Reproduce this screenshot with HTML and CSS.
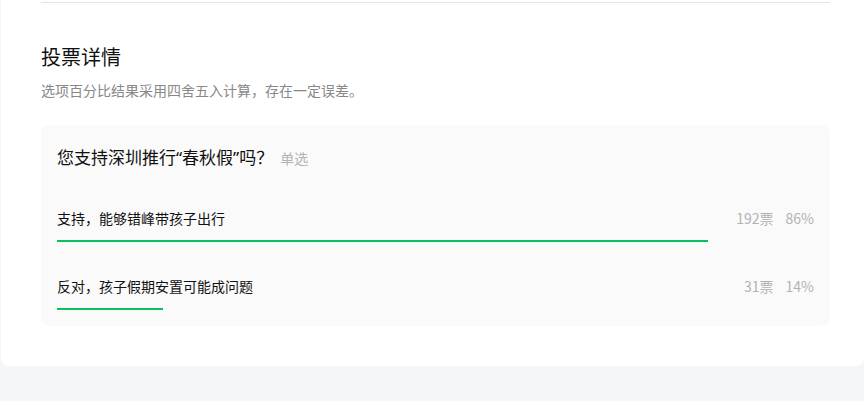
FILE: index.html
```html
<!DOCTYPE html>
<html lang="zh">
<head>
<meta charset="utf-8">
<link rel="stylesheet" href="styles.css">
</head>
<body>
<div class="card">
  <div class="divider"></div>
  <h2 class="title">投票详情</h2>
  <p class="subtitle">选项百分比结果采用四舍五入计算，存在一定误差。</p>
  <div class="vote">
    <div class="question">您支持深圳推行<span class="q">“</span>春秋假<span class="q">”</span>吗？<span class="tag">单选</span></div>
    <div class="option">
      <div class="row">
        <span class="label">支持，能够错峰带孩子出行</span>
        <span class="stat"><span class="count">192票</span><span class="pct">86%</span></span>
      </div>
      <div class="track"><div class="bar" style="width:86%"></div></div>
    </div>
    <div class="option">
      <div class="row">
        <span class="label">反对，孩子假期安置可能成问题</span>
        <span class="stat"><span class="count">31票</span><span class="pct">14%</span></span>
      </div>
      <div class="track"><div class="bar" style="width:14%"></div></div>
    </div>
  </div>
</div>
</body>
</html>
```
FILE: styles.css
```css
html, body {
  margin: 0;
  padding: 0;
  background: #f5f6f8;
  font-family: "Noto Sans CJK SC", "Noto Sans", sans-serif;
}
.card {
  margin-left: 1px;
  background: #fff;
  padding: 2px 34px 40px 40px;
  border-radius: 0 0 8px 8px;
}
.divider {
  height: 1px;
  background: #e5e5e5;
}
.title {
  margin: 40px 0 0;
  font-size: 20px;
  line-height: 28px;
  font-weight: 400;
  color: #111;
}
.subtitle {
  margin: 9px 0 0;
  font-size: 14px;
  line-height: 20px;
  color: #888;
}
.vote {
  margin-top: 25px;
  background: #fafafa;
  border-radius: 8px;
  padding: 20px 16px 16px;
}
.question {
  font-size: 17px;
  line-height: 24px;
  color: #111;
}
.q {
  font-family: "Noto Sans", sans-serif;
}
.tag {
  margin-left: 7px;
  font-size: 14px;
  color: #b2b2b2;
}
.option {
  margin-top: 34px;
}
.question + .option {
  margin-top: 38px;
}
.row {
  display: flex;
  justify-content: space-between;
  align-items: center;
  font-size: 14px;
  line-height: 20px;
}
.label {
  color: #111;
}
.stat {
  display: flex;
  gap: 12px;
  color: #b2b2b2;
}
.track {
  margin-top: 12px;
  height: 2px;
}
.bar {
  height: 2px;
  background: #07c160;
}
```
